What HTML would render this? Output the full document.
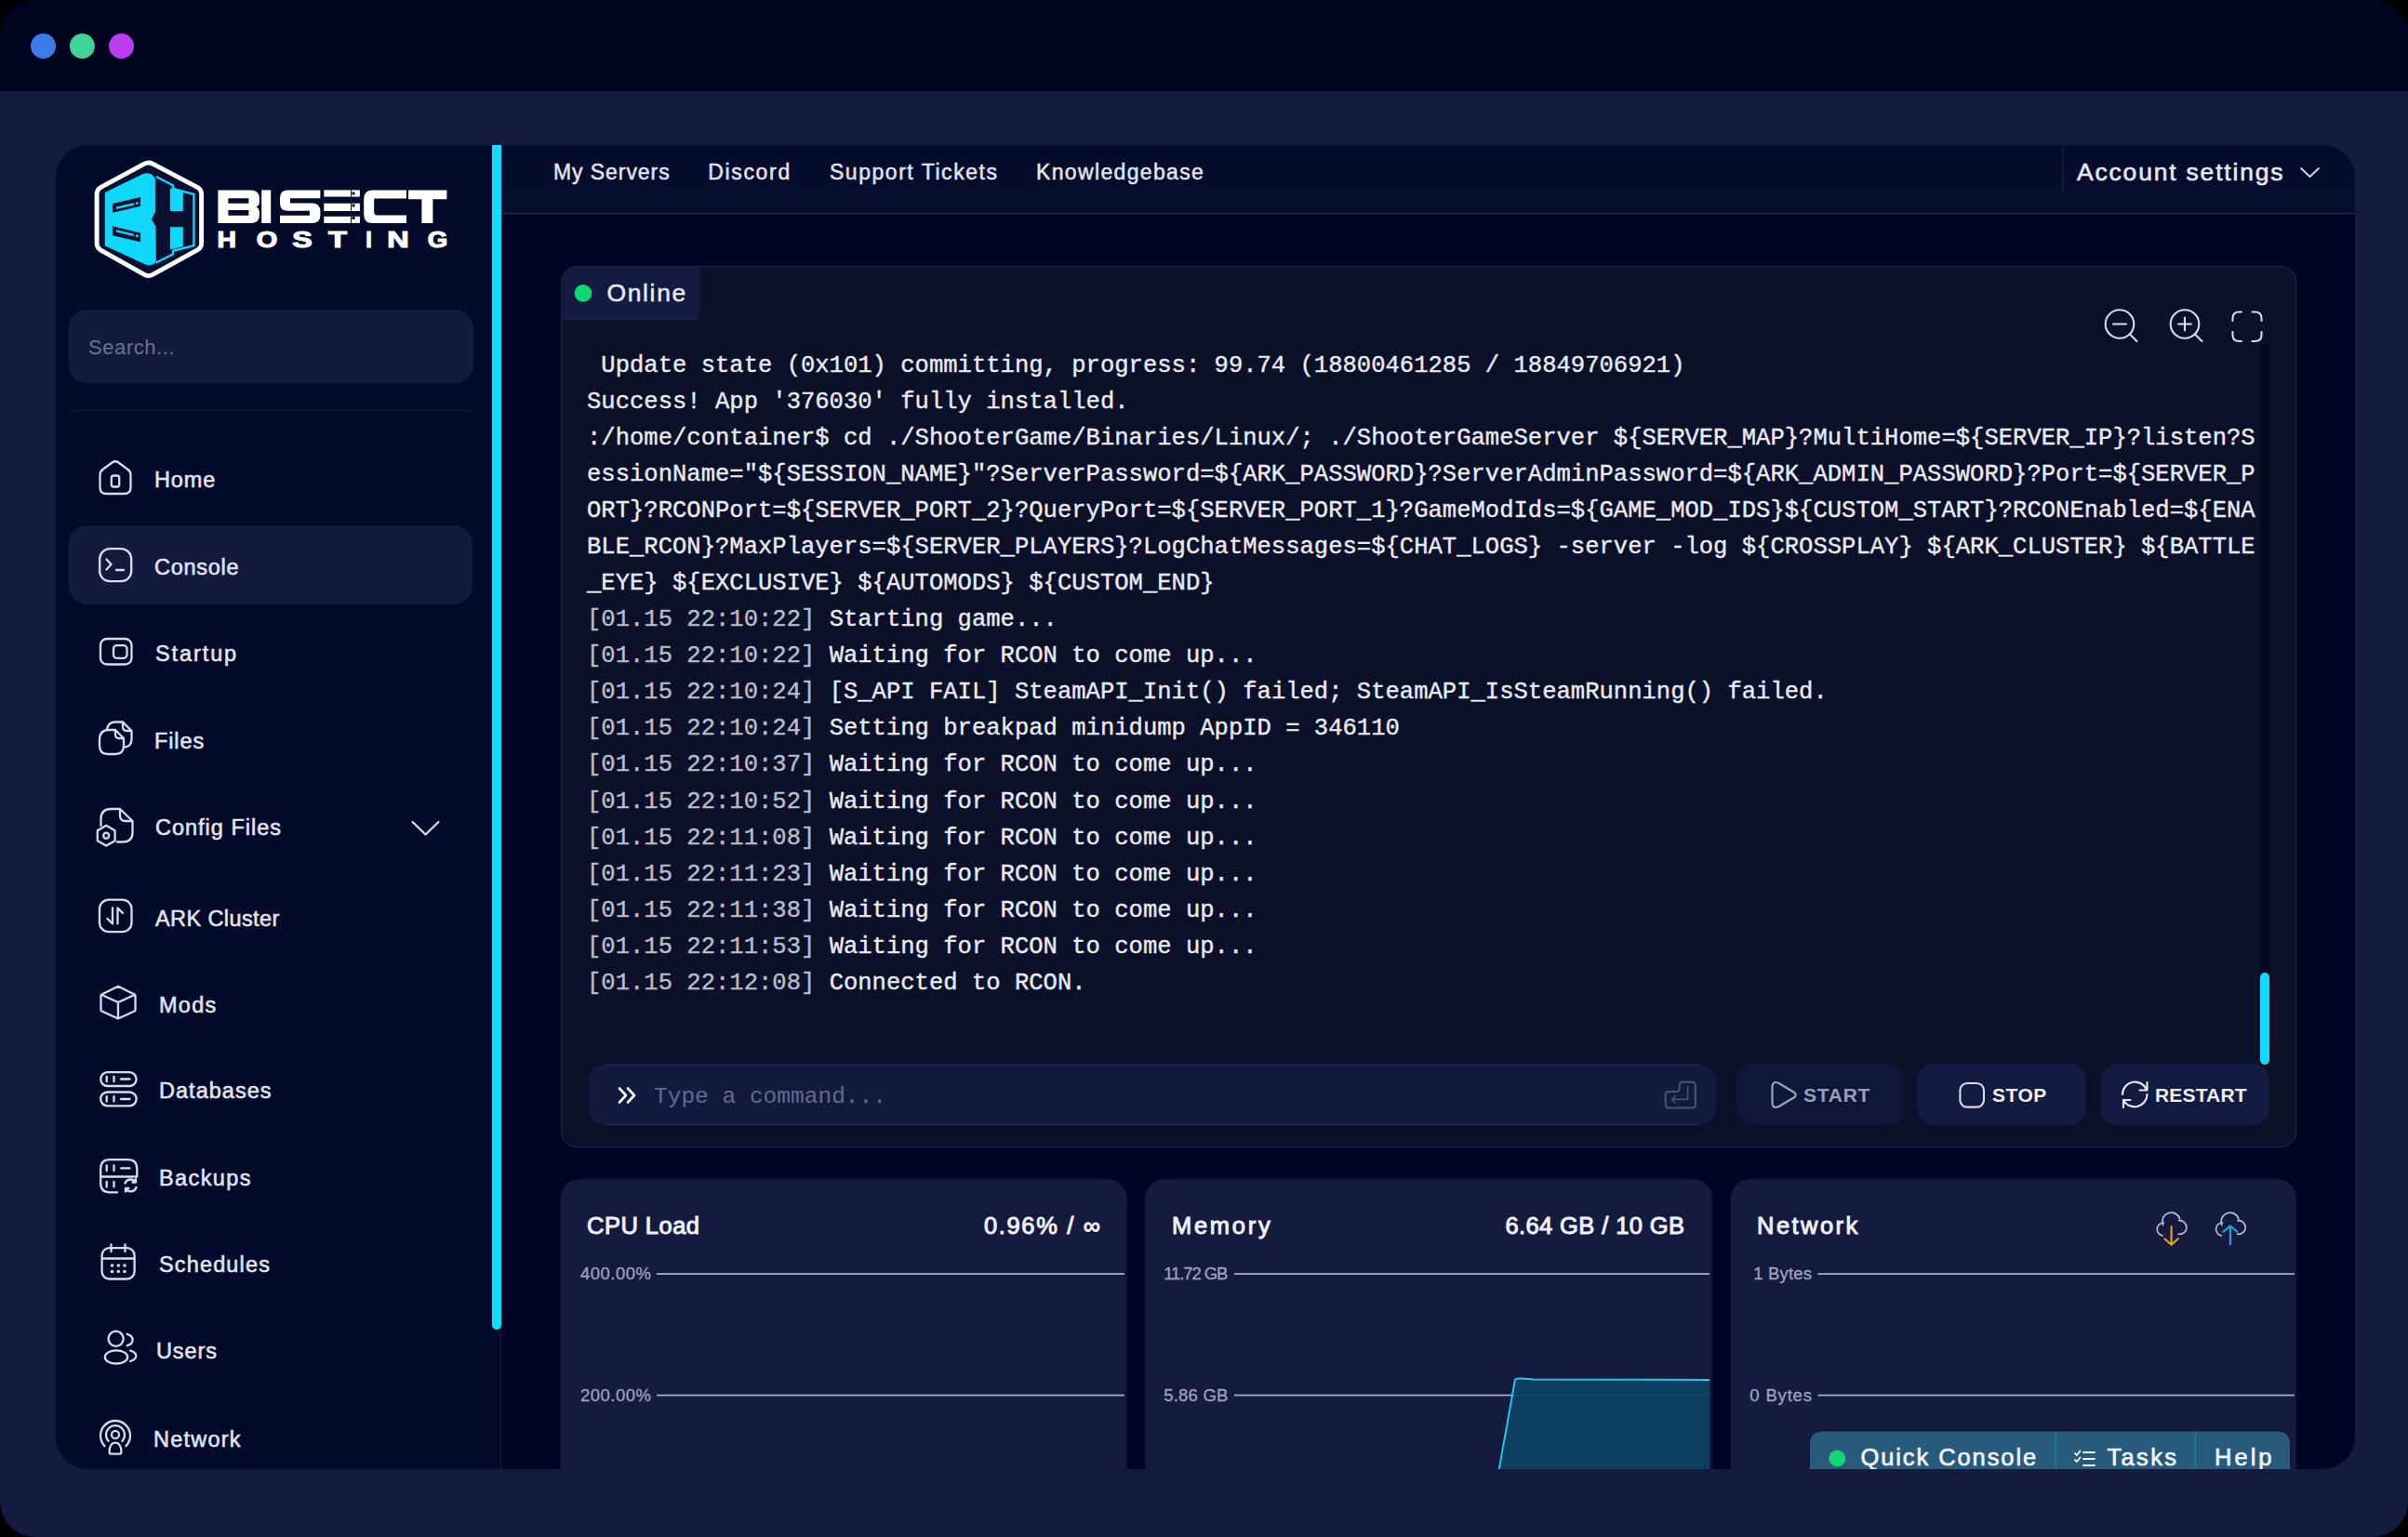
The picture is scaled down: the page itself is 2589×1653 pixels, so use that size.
<!DOCTYPE html>
<html><head><meta charset="utf-8">
<style>
html,body{margin:0;padding:0;background:#000;width:2589px;height:1653px;overflow:hidden}
svg{display:block}
text{font-family:"Liberation Sans",sans-serif}
.mono,.mono text{font-family:"Liberation Mono",monospace}
.ic{fill:none;stroke:#d9dbe8;stroke-width:2.3;stroke-linecap:round;stroke-linejoin:round}
.nav{font-size:23.5px;fill:#e2e4f0;stroke:#e2e4f0;stroke-width:0.55px;letter-spacing:0.9px}
</style></head>
<body>
<svg width="2589" height="1653" viewBox="0 0 2589 1653">
<defs>
  <clipPath id="win"><rect x="0" y="0" width="2589" height="1653" rx="38"/></clipPath>
  <clipPath id="panel"><rect x="60" y="156" width="2472" height="1424" rx="35"/></clipPath>
  <linearGradient id="hdr" x1="0" y1="0" x2="0" y2="1"><stop offset="0" stop-color="#040a29"/><stop offset="1" stop-color="#080e2e"/></linearGradient>
</defs>
<rect width="2589" height="1653" fill="#000"/>
<g clip-path="url(#win)">
  <rect width="2589" height="1653" fill="#151b3e"/>
  <rect width="2589" height="98" fill="#01041f"/>
  <circle cx="46.5" cy="49.5" r="13.5" fill="#3a7de8"/>
  <circle cx="88.4" cy="49.5" r="13.5" fill="#3dd598"/>
  <circle cx="130.5" cy="49.5" r="13.5" fill="#b93cf0"/>

  <g clip-path="url(#panel)">
    <rect x="60" y="156" width="2472" height="1424" fill="#010523"/>
    <!-- sidebar -->
    <rect x="60" y="156" width="478" height="1424" fill="#040b2a"/>
    <!-- header -->
    <rect x="539" y="156" width="1993" height="73" fill="url(#hdr)"/>
    <rect x="539" y="229" width="1993" height="1.5" fill="#1e2242"/>
    <rect x="2217.5" y="156" width="1.2" height="53" fill="#1a2040"/>
    <!-- sidebar scrollbar -->
    <rect x="537.8" y="156" width="1.4" height="1424" fill="#111839"/>
    <path d="M529,150 H539 V1425 A5,5 0 0 1 529,1425 Z" fill="#0fdcff"/>
        <!-- logo -->
    <g transform="translate(95,165) scale(0.0910865)">
      <path d="M662,122 Q710,96 759,122 L1286,399 Q1335,425 1335,480 L1335,1060 Q1335,1115 1287,1141 L758,1432 Q710,1458 662,1431 L148,1142 Q100,1115 100,1060 L100,480 Q100,425 148,399 Z" fill="#0a1030" stroke="#ffffff" stroke-width="54"/>
      <path d="M195,460 L640,245 Q745,205 790,300 L790,690 L745,778 L795,862 L800,1270 Q775,1335 675,1312 L195,1090 Z" fill="#0fd8fa"/>
      <path d="M800,275 L1000,378 L1000,415 L1245,482 L1245,1088 L1000,1150 L1000,1188 L800,1290" fill="none" stroke="#0fd8fa" stroke-width="26" stroke-linejoin="miter"/>
      <path d="M965,410 L1118,448 L1118,680 L965,680 Z M965,870 L1118,870 L1118,1098 L965,1138 Z" fill="#0fd8fa"/>
      <path d="M285,592 L615,515 L615,622 L285,700 Z M285,860 L615,938 L615,1045 L285,968 Z" fill="#0a1030"/>
      <path d="M328,632 L590,570 L590,598 L328,660 Z M328,900 L590,962 L590,990 L328,928 Z" fill="#0fd8fa"/>
      <circle cx="548" cy="595" r="14" fill="#0a1030"/>
      <circle cx="548" cy="963" r="14" fill="#0a1030"/>
    </g>
    <!-- BISECT -->
    <g transform="translate(234.4,204.4)" fill="#ffffff">
      <path fill-rule="evenodd" d="M0,0 H35 Q44.5,0 44.5,9 V13 Q44.5,17 41,18 Q44.5,19.5 44.5,24 V27 Q44.5,35.5 35,35.5 H0 Z M11,8.8 V14.3 H33 V8.8 Z M11,21.5 V27.4 H33 V21.5 Z"/>
      <rect x="46.8" y="0" width="10" height="35.5"/>
      <path d="M75,0 H110 V8.8 H77.6 V14 H101 Q110,14 110,23 V27 Q110,35.5 101,35.5 H66.6 V27.4 H98.5 V22.4 H75 Q66.6,22.4 66.6,14 V8.5 Q66.6,0 75,0 Z"/>
      <rect x="113.9" y="0" width="38.6" height="7.2"/>
      <rect x="113.9" y="14.3" width="38.6" height="8.3"/>
      <rect x="113.9" y="28.4" width="38.6" height="7.1"/>
      <path fill-rule="evenodd" d="M166,0 H202.6 V9 H168 Q167.8,9 167.8,13 V23 Q167.8,27 171,27 H202.6 V35.5 H166 Q156.8,35.5 156.8,26 V9.5 Q156.8,0 166,0 Z"/>
      <path d="M204.7,0 H246 V9.9 H231 V35.5 H219 V9.9 H204.7 Z"/>
    </g>
    <g fill="#0a1030"><rect x="378.5" y="206.5" width="3" height="3"/><rect x="378.5" y="219.5" width="3" height="3"/><rect x="378.5" y="233" width="3" height="3"/><rect x="377" y="204" width="1" height="36"/></g>
    <g font-family="Liberation Sans" font-weight="bold" font-size="24" fill="#ffffff" stroke="#ffffff" stroke-width="1.1">
      <text x="233.5" y="265.6" textLength="20.5" lengthAdjust="spacingAndGlyphs">H</text>
      <text x="275.8" y="265.6" textLength="22.5" lengthAdjust="spacingAndGlyphs">O</text>
      <text x="314.3" y="265.6" textLength="21.5" lengthAdjust="spacingAndGlyphs">S</text>
      <text x="353" y="265.6" textLength="20" lengthAdjust="spacingAndGlyphs">T</text>
      <text x="393.2" y="265.6" textLength="6.5" lengthAdjust="spacingAndGlyphs">I</text>
      <text x="416.2" y="265.6" textLength="23.5" lengthAdjust="spacingAndGlyphs">N</text>
      <text x="459.7" y="265.6" textLength="21.5" lengthAdjust="spacingAndGlyphs">G</text>
    </g>
    <!-- search -->
    <rect x="74" y="333" width="435" height="79" rx="20" fill="#131a3e"/>
    <text x="95.1" y="380.5" font-size="22" fill="#6b7290" textLength="92.4" lengthAdjust="spacing">Search...</text>
    <rect x="76" y="440.5" width="432" height="1.2" fill="#141a38"/>
    <!-- active item -->
    <rect x="74" y="565" width="434" height="85" rx="20" fill="#131a3e"/>
    <!-- nav texts -->
    <g class="nav">
      <text x="166.0" y="523.5" textLength="66.3" lengthAdjust="spacing">Home</text>
      <text x="166.0" y="618" textLength="91.5" lengthAdjust="spacing">Console</text>
      <text x="167.0" y="711" textLength="88.1" lengthAdjust="spacing">Startup</text>
      <text x="166.0" y="805" textLength="54.1" lengthAdjust="spacing">Files</text>
      <text x="167.0" y="898" textLength="135.9" lengthAdjust="spacing">Config Files</text>
      <text x="167.0" y="995.5" textLength="134.2" lengthAdjust="spacing">ARK Cluster</text>
      <text x="171.0" y="1088.5" textLength="62.1" lengthAdjust="spacing">Mods</text>
      <text x="171.0" y="1181" textLength="121.5" lengthAdjust="spacing">Databases</text>
      <text x="171.0" y="1274.6" textLength="99.4" lengthAdjust="spacing">Backups</text>
      <text x="171.0" y="1368" textLength="119.8" lengthAdjust="spacing">Schedules</text>
      <text x="168.0" y="1461" textLength="65.9" lengthAdjust="spacing">Users</text>
      <text x="165.0" y="1556" textLength="94.5" lengthAdjust="spacing">Network</text>
    </g>
    <!-- nav icons -->
    <g class="ic">
      <!-- home -->
      <path d="M107.5,511 V524 Q107.5,531 114.5,531 H133.5 Q140.5,531 140.5,524 V511 Q140.5,507 137,504.5 L127.5,497.5 Q124,495 120.5,497.5 L111,504.5 Q107.5,507 107.5,511 Z"/>
      <rect x="119.8" y="511.5" width="8.4" height="12" rx="2.5"/>
      <!-- console -->
      <rect x="107.2" y="590.2" width="34" height="35" rx="11"/>
      <path d="M114.5,601.5 L119.5,607 L114.5,612.5 M125,613 H133"/>
      <!-- startup -->
      <rect x="108" y="687" width="33.5" height="27.5" rx="7"/>
      <rect x="122" y="694.2" width="14.5" height="13.6" rx="3.5"/>
      <!-- files -->
      <path d="M107,796 Q107,785 117,785 H124 L133,794 V802 Q133,811 124,811 H116 Q107,811 107,802 Z M124,785 V790 Q124,794 128,794 H133"/>
      <path d="M115,785 Q116,776.5 124,776.5 H132 L141.5,786 V795 Q141.5,803.5 133,803.5 M132,776.5 V781.5 Q132,786 136.5,786 H141.5"/>
      <!-- config files -->
      <path d="M108.5,888 V881 Q108.5,870 119.5,870 H129 L142.5,883 V895 Q142.5,905.5 132,905.5 H126 M129,870 V877 Q129,883 135,883 H142.5"/>
      <path d="M114.2,887.8 L123.6,893.2 V904.2 L114.2,909.6 L104.8,904.2 V893.2 Z"/>
      <circle cx="114.2" cy="898.7" r="3"/>
      <!-- ark -->
      <rect x="107" y="967.6" width="34.5" height="34.6" rx="10"/>
      <path d="M121,976.5 V993.5 L115.5,988 M126.5,993.5 V976.5 L132,982"/>
      <!-- mods -->
      <path d="M127,1060.7 L144.6,1069.5 Q145.5,1070 145.5,1071 V1086 Q145.5,1087 144.6,1087.5 L127,1095.5 L109.4,1087.5 Q108.5,1087 108.5,1086 V1071 Q108.5,1070 109.4,1069.5 Z M109,1069.8 L127,1078 L145,1069.8 M127,1078 V1095.3"/>
      <!-- databases -->
      <rect x="108.2" y="1153.2" width="38.4" height="14.8" rx="7.4"/>
      <rect x="108.2" y="1174.5" width="38.4" height="14.8" rx="7.4"/>
      <path d="M114.7,1157.8 V1163.2 M122.5,1157.8 V1163.2 M130,1160.5 H139.5 M114.7,1179.2 V1184.6 M122.5,1179.2 V1184.6 M130,1182 H139.5"/>
      <!-- backups -->
      <path d="M108.2,1265.5 V1257 Q108.2,1247.2 118,1247.2 H137.5 Q147.3,1247.2 147.3,1257 V1265.5 H108.2 V1272.5 Q108.2,1282.3 118,1282.3 H126"/>
      <path d="M114.7,1253.5 V1259 M122.5,1253.5 V1259 M130,1256.3 H139.5 M114.7,1271 V1276.5 M122.5,1271 V1276.5"/>
      <path d="M134.5,1272.5 Q136,1268.5 140.5,1268.5 Q144,1268.5 146,1271 M146,1268 V1271.5 H142.5 M146.5,1277 Q145,1281.3 140.5,1281.3 Q137,1281.3 135,1278.5 M135,1281.5 V1278 H138.5"/>
      <!-- schedules -->
      <rect x="109.6" y="1342.2" width="35" height="33.3" rx="8"/>
      <path d="M110,1353.5 H144.2 M119.5,1338.5 V1346 M134.5,1338.5 V1346"/>
      <!-- users -->
      <circle cx="124.6" cy="1439.8" r="8.1"/>
      <ellipse cx="125" cy="1459.4" rx="12.2" ry="7.1"/>
      <path d="M136.8,1434.8 Q142.6,1436.5 142.6,1441 Q142.6,1445.5 136.8,1447.2 M140.2,1452.5 Q146.3,1454.5 146.3,1458.2 Q146.3,1462 140.2,1463.8"/>
      <!-- network -->
      <circle cx="124" cy="1542.9" r="4"/>
      <path d="M116.6,1549.9 A10.0,10.0 0 1 1 131.4,1549.9"/>
      <path d="M112.5,1555.1 A16.0,16.0 0 1 1 135.5,1555.1"/>
      <path d="M117.6,1561.8 Q117.6,1551.6 124,1551.6 Q130.4,1551.6 130.4,1561.8 Q130.4,1563.6 128.6,1563.6 H119.4 Q117.6,1563.6 117.6,1561.8 Z"/>
      <!-- config chevron -->
      <path d="M443.5,884 L457.5,897.5 L471.5,884"/>
    </g>
    <g fill="#d9dbe8">
      <circle cx="120.5" cy="1361" r="1.8"/><circle cx="127.3" cy="1361" r="1.8"/><circle cx="134" cy="1361" r="1.8"/>
      <circle cx="120.5" cy="1367.5" r="1.8"/><circle cx="127.3" cy="1367.5" r="1.8"/><circle cx="134" cy="1367.5" r="1.8"/>
    </g>

        <!-- header nav -->
    <g class="nav2" font-size="23" fill="#e2e4f0" stroke="#e2e4f0" stroke-width="0.5" letter-spacing="0.6">
      <text x="595.0" y="192.5" textLength="125.3" lengthAdjust="spacing">My Servers</text>
      <text x="761.2" y="192.5" textLength="88.6" lengthAdjust="spacing">Discord</text>
      <text x="892.0" y="192.5" textLength="180.5" lengthAdjust="spacing">Support Tickets</text>
      <text x="1114.0" y="192.5" textLength="180.5" lengthAdjust="spacing">Knowledgebase</text>
    </g>
    <text x="2233.0" y="193.8" font-size="26.5" fill="#e6e8f4" stroke="#e6e8f4" stroke-width="0.6" letter-spacing="0.8" textLength="222.3" lengthAdjust="spacing">Account settings</text>
    <path class="ic" d="M2474,181 L2483.5,190 L2493,181" style="stroke-width:1.8"/>

        <!-- console card -->
    <rect x="603.6" y="286.6" width="1865" height="947" rx="17" fill="#0c1029" stroke="#1f2444" stroke-width="1.3"/>
    <path d="M604.3,343 V304 Q604.3,287.3 621,287.3 H752.6 V334 Q752.6,343 743.6,343 Z" fill="#141b42"/>
    <rect x="604.3" y="342.2" width="146" height="1.3" fill="#232a52"/>
    <circle cx="627" cy="315.4" r="9.3" fill="#10d674"/>
    <text x="652.4" y="324" font-size="26.5" fill="#e8eaf4" stroke="#e8eaf4" stroke-width="0.5" letter-spacing="1" textLength="85.9" lengthAdjust="spacing">Online</text>
    <g class="ic" style="stroke-width:2.1">
      <circle cx="2279" cy="348.5" r="15.3"/>
      <path d="M2290.5,360 L2297.5,367 M2272,348.5 H2286"/>
      <circle cx="2349" cy="348.5" r="15.3"/>
      <path d="M2360.5,360 L2367.5,367 M2342,348.5 H2356 M2349,341.5 V355.5"/>
      <path d="M2400.5,345 V342.5 Q2400.5,335.5 2407.5,335.5 H2410 M2421.5,335.5 H2424.5 Q2431.5,335.5 2431.5,342.5 V345 M2431.5,357 V360 Q2431.5,367 2424.5,367 H2421.5 M2410,367 H2407.5 Q2400.5,367 2400.5,360 V357"/>
    </g>
    <!-- scroll track/thumb -->
    <rect x="2430" y="370" width="10" height="776" fill="#04071f"/>
    <rect x="2430" y="1046" width="10" height="99" rx="5" fill="#0fdcff"/>
    <g class="mono" font-size="25.55" fill="#e8eaf2" stroke="#e8eaf2" stroke-width="0.4" style="white-space:pre">
<text x="631" y="399.90">&#160;Update state (0x101) committing, progress: 99.74 (18800461285 / 18849706921)</text>
<text x="631" y="438.95">Success! App &#x27;376030&#x27; fully installed.</text>
<text x="631" y="478.00">:/home/container$ cd ./ShooterGame/Binaries/Linux/; ./ShooterGameServer ${SERVER_MAP}?MultiHome=${SERVER_IP}?listen?S</text>
<text x="631" y="517.05">essionName=&quot;${SESSION_NAME}&quot;?ServerPassword=${ARK_PASSWORD}?ServerAdminPassword=${ARK_ADMIN_PASSWORD}?Port=${SERVER_P</text>
<text x="631" y="556.10">ORT}?RCONPort=${SERVER_PORT_2}?QueryPort=${SERVER_PORT_1}?GameModIds=${GAME_MOD_IDS}${CUSTOM_START}?RCONEnabled=${ENA</text>
<text x="631" y="595.15">BLE_RCON}?MaxPlayers=${SERVER_PLAYERS}?LogChatMessages=${CHAT_LOGS} -server -log ${CROSSPLAY} ${ARK_CLUSTER} ${BATTLE</text>
<text x="631" y="634.20">_EYE} ${EXCLUSIVE} ${AUTOMODS} ${CUSTOM_END}</text>
<text x="631" y="673.25"><tspan fill="#b9bccb" stroke="#b9bccb">[01.15 22:10:22]</tspan> Starting game...</text>
<text x="631" y="712.30"><tspan fill="#b9bccb" stroke="#b9bccb">[01.15 22:10:22]</tspan> Waiting for RCON to come up...</text>
<text x="631" y="751.35"><tspan fill="#b9bccb" stroke="#b9bccb">[01.15 22:10:24]</tspan> [S_API FAIL] SteamAPI_Init() failed; SteamAPI_IsSteamRunning() failed.</text>
<text x="631" y="790.40"><tspan fill="#b9bccb" stroke="#b9bccb">[01.15 22:10:24]</tspan> Setting breakpad minidump AppID = 346110</text>
<text x="631" y="829.45"><tspan fill="#b9bccb" stroke="#b9bccb">[01.15 22:10:37]</tspan> Waiting for RCON to come up...</text>
<text x="631" y="868.50"><tspan fill="#b9bccb" stroke="#b9bccb">[01.15 22:10:52]</tspan> Waiting for RCON to come up...</text>
<text x="631" y="907.55"><tspan fill="#b9bccb" stroke="#b9bccb">[01.15 22:11:08]</tspan> Waiting for RCON to come up...</text>
<text x="631" y="946.60"><tspan fill="#b9bccb" stroke="#b9bccb">[01.15 22:11:23]</tspan> Waiting for RCON to come up...</text>
<text x="631" y="985.65"><tspan fill="#b9bccb" stroke="#b9bccb">[01.15 22:11:38]</tspan> Waiting for RCON to come up...</text>
<text x="631" y="1024.70"><tspan fill="#b9bccb" stroke="#b9bccb">[01.15 22:11:53]</tspan> Waiting for RCON to come up...</text>
<text x="631" y="1063.75"><tspan fill="#b9bccb" stroke="#b9bccb">[01.15 22:12:08]</tspan> Connected to RCON.</text>
</g>

    <!-- input -->
    <rect x="633" y="1144.6" width="1212" height="65.4" rx="18" fill="#131a40"/>
    <path d="M651,1145.2 H1827 M651,1209.4 H1827" stroke="#252c5a" stroke-width="1.2"/>
    <path d="M666,1170.5 L673,1178 L666,1185.5 M675,1170.5 L682,1178 L675,1185.5" fill="none" stroke="#ffffff" stroke-width="2.6" stroke-linecap="round" stroke-linejoin="round"/>
    <text class="mono" x="703" y="1186" font-size="24.5" fill="#646b8c" style="white-space:pre">Type a command...</text>
    <path d="M1808.8,1163.8 H1819 Q1822.8,1163.8 1822.8,1167.6 V1187.8 Q1822.8,1191.6 1819,1191.6 H1794.5 Q1790.7,1191.6 1790.7,1187.8 V1177.8 Q1790.7,1174 1794.5,1174 H1802 Q1805.8,1174 1805.8,1170.2 V1167.6 Q1805.8,1163.8 1808.8,1163.8 Z" fill="none" stroke="#4b5378" stroke-width="2"/>
    <path d="M1814.6,1168.5 V1182.3 H1797.8 M1801.3,1178.5 L1797.7,1182.3 L1801.3,1186" fill="none" stroke="#4b5378" stroke-width="1.4" stroke-linecap="round" stroke-linejoin="round"/>
    <!-- buttons -->
    <rect x="1866.5" y="1144" width="180.5" height="66" rx="18" fill="#10163a"/>
    <rect x="2061" y="1144" width="181.5" height="66" rx="18" fill="#141b42"/>
    <rect x="2258.5" y="1144" width="181.5" height="66" rx="18" fill="#141b42"/>
    <path d="M1905.5,1170 Q1905.5,1161 1913.5,1165.5 L1928.5,1174.5 Q1933,1177.5 1928.5,1180.5 L1913.5,1189.5 Q1905.5,1194 1905.5,1185 Z" fill="none" stroke="#a0a4b8" stroke-width="2.2" stroke-linejoin="round"/>
    <rect x="2107.4" y="1165" width="25.6" height="25.6" rx="7.5" fill="none" stroke="#d9dbe8" stroke-width="2.1"/>
    <path d="M2282,1177 A13.5,13.5 0 0 1 2308,1172 M2308.5,1164 V1172.5 H2300.5 M2308.5,1177 A13.5,13.5 0 0 1 2283,1183 M2283,1191 V1183 H2290.5" fill="none" stroke="#e6e8f2" stroke-width="2.1" stroke-linecap="round" stroke-linejoin="round"/>
    <g font-size="21" font-weight="bold" letter-spacing="0.5">
      <text x="1939.0" y="1185.3" fill="#9ca0b4" textLength="71.9" lengthAdjust="spacing">START</text>
      <text x="2142" y="1185.3" fill="#eceef6">STOP</text>
      <text x="2317.0" y="1185.3" fill="#eceef6" textLength="99.1" lengthAdjust="spacing">RESTART</text>
    </g>

        <!-- stat cards -->
    <rect x="602.5" y="1268.3" width="609" height="400" rx="20" fill="#151b3e"/>
    <rect x="1231.3" y="1268.3" width="609.5" height="400" rx="20" fill="#151b3e"/>
    <rect x="1860.8" y="1268.3" width="608" height="400" rx="20" fill="#151b3e"/>
    <g font-size="25.5" fill="#eef0f8" stroke="#eef0f8" stroke-width="1.0">
      <text x="631.0" y="1327" textLength="121.0" lengthAdjust="spacing">CPU Load</text>
      <text x="1260.0" y="1327" textLength="105.7" lengthAdjust="spacing">Memory</text>
      <text x="1889.0" y="1327" textLength="108.3" lengthAdjust="spacing">Network</text>
      <text x="1183.0" y="1327" text-anchor="end" textLength="125.1" lengthAdjust="spacing">0.96% / ∞</text>
      <text x="1811.0" y="1327" text-anchor="end" textLength="192.6" lengthAdjust="spacing">6.64 GB / 10 GB</text>
    </g>
    <g font-size="18.5" fill="#9ea4be" stroke="#9ea4be" stroke-width="0.3" text-anchor="end">
      <text x="700.0" y="1376" textLength="76.0" lengthAdjust="spacing">400.00%</text>
      <text x="700.0" y="1507" textLength="76.0" lengthAdjust="spacing">200.00%</text>
      <text x="1320.4" y="1376" textLength="69.2" lengthAdjust="spacing">11.72 GB</text>
      <text x="1320.4" y="1507" textLength="69.2" lengthAdjust="spacing">5.86 GB</text>
      <text x="1948.0" y="1376" textLength="62.7" lengthAdjust="spacing">1 Bytes</text>
      <text x="1948.0" y="1507" textLength="66.7" lengthAdjust="spacing">0 Bytes</text>
    </g>
    <g fill="#aab2d2">
      <rect x="706" y="1369.2" width="503" height="1.7"/>
      <rect x="706" y="1499.7" width="503" height="1.7"/>
      <rect x="1327" y="1369.2" width="511" height="1.7"/>
      <rect x="1954.5" y="1369.2" width="512.5" height="1.7"/>
      <rect x="1954.5" y="1499.7" width="512.5" height="1.7"/>
    </g>
    <rect x="1327" y="1499.7" width="511" height="1.7" fill="#aab2d2"/>
    <path d="M1611.4,1582 L1629,1483.5 Q1631,1482.3 1636,1482.5 L1649,1483.5 L1838,1484 V1600 H1611.4 Z" fill="#0b4162" fill-opacity="0.93"/>
    <path d="M1611.4,1582 L1629,1483.5 Q1631,1482.3 1636,1482.5 L1649,1483.5 L1838,1484" fill="none" stroke="#1ec8ec" stroke-width="2"/>
    <!-- network icons -->
    <g fill="none" stroke="#b8bcd2" stroke-width="1.7" stroke-linecap="round">
      <path d="M2325.1,1328.9 A7,7 0 0 1 2326.5,1315.0 M2325.6,1317.5 A9.6,9.6 0 1 1 2343.6,1310.9 M2342.6,1312.8 A7.3,7.3 0 1 1 2342.3,1327.2"/>
      <path d="M2388.4,1328.9 A7,7 0 0 1 2389.8,1315.0 M2388.9,1317.5 A9.6,9.6 0 1 1 2406.9,1310.9 M2405.9,1312.8 A7.3,7.3 0 1 1 2405.6,1327.2"/>
    </g>
    <path d="M2334.6,1319 V1338.5 M2327.4,1332.2 L2334.6,1338.8 L2341.8,1332.2" fill="none" stroke="#e3a421" stroke-width="2.1" stroke-linecap="round" stroke-linejoin="round"/>
    <path d="M2397.9,1338.2 V1318.6 M2390.6,1324.6 L2397.9,1318.4 L2405.2,1324.6" fill="none" stroke="#1fa8dc" stroke-width="2.1" stroke-linecap="round" stroke-linejoin="round"/>
    <!-- quick console bar -->
    <path d="M1946,1600 V1553.6 Q1946,1539.6 1960,1539.6 H2448 Q2462,1539.6 2462,1553.6 V1600 Z" fill="#285a7c"/>
    <rect x="2209.3" y="1539.6" width="1.6" height="60" fill="#1a7c96"/>
    <rect x="2359.5" y="1539.6" width="1.6" height="60" fill="#1a7c96"/>
    <circle cx="1975.4" cy="1568.5" r="9" fill="#10d674"/>
    <g font-size="25.5" fill="#eef4fa" stroke="#eef4fa" stroke-width="0.7">
      <text x="2000.4" y="1576" textLength="188.8" lengthAdjust="spacing">Quick Console</text>
      <text x="2265.4" y="1576" textLength="74.6" lengthAdjust="spacing">Tasks</text>
      <text x="2381.0" y="1576" textLength="61.5" lengthAdjust="spacing">Help</text>
    </g>
    <path d="M2240,1562 H2252 M2240,1569 H2252 M2240,1576 H2252 M2231,1563 L2233,1565 L2236.5,1560.5 M2231,1570 L2233,1572 L2236.5,1567.5" fill="none" stroke="#eef4fa" stroke-width="1.8" stroke-linecap="round" stroke-linejoin="round"/>

  </g>
</g>
</svg>
</body></html>
